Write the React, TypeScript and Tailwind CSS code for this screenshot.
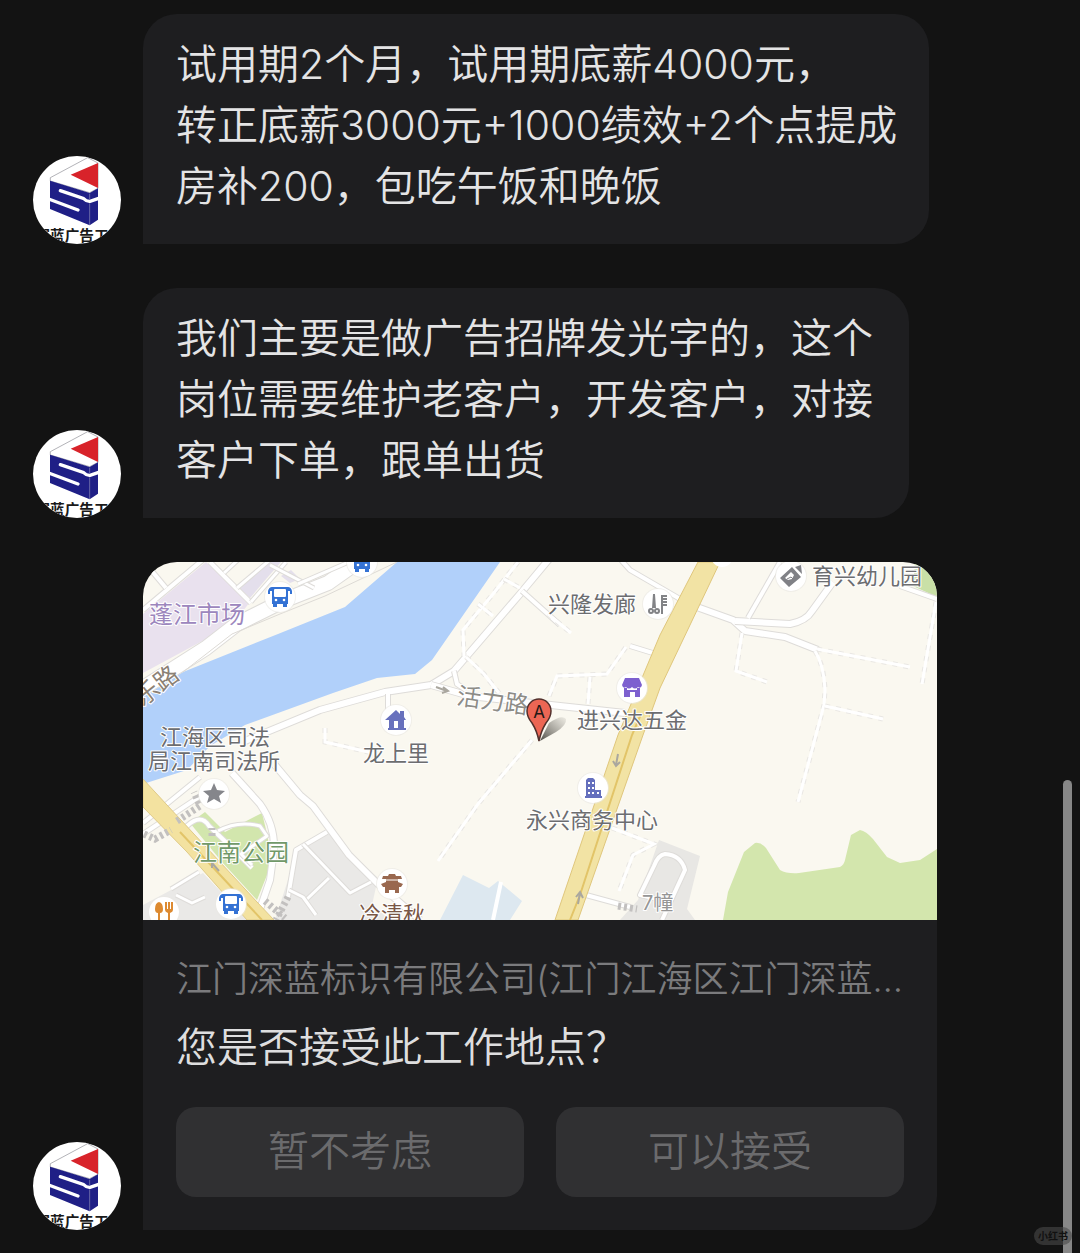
import { type ReactNode } from "react";

interface ChatMessage {
  id: string;
  lines: string[];
  width: string;
}

const messages: ChatMessage[] = [
  {
    id: "salary",
    lines: ["试用期2个月，试用期底薪4000元，", "转正底薪3000元+1000绩效+2个点提成", "房补200，包吃午饭和晚饭"],
    width: "w-[786px] pr-5",
  },
  {
    id: "duties",
    lines: ["我们主要是做广告招牌发光字的，这个岗位需要维护老客户，开发客户，对接客户下单，跟单出货"],
    width: "w-[766px] pr-8",
  },
];

function Avatar() {
  return (
    <svg viewBox="39 33 264 264" className="size-[88px] shrink-0 rounded-full bg-white">
      <path d="M91 108 V98 L203 38 L234 54 V130 L209 143 Z" fill="#fff" stroke="#8c8c94" strokeWidth="2" />
      <path d="M152 89 L234 54 V129 Z" fill="#d8232a" />
      <path d="M90 107 L209 144 L234 130 V224 L209 241 L90 192 Z" fill="#1f1f86" />
      <path d="M121 137 L190 160 Q200 170 210 169 L236 160" fill="none" stroke="#fff" strokeWidth="10" strokeLinecap="round" />
      <path d="M86 162 L174 195" stroke="#fff" strokeWidth="10" strokeLinecap="round" />
      <path d="M209 146 V163 M209 175 V240" stroke="#8d8db8" strokeWidth="2" />
      <text x="46" y="289" fontSize="44" fontWeight="700" fill="#1a1a1a">深蓝广告工</text>
    </svg>
  );
}

function Row({ children }: { children: ReactNode }) {
  return (
    <li className="flex items-end gap-[22px]">
      <Avatar />
      {children}
    </li>
  );
}

function Road({ d, w = 6 }: { d: string; w?: number }) {
  return (
    <g fill="none" strokeLinejoin="round">
      <path d={d} stroke="#dedcd9" strokeWidth={w + 2} />
      <path d={d} stroke="#fff" strokeWidth={w} />
    </g>
  );
}

function Lane({ d }: { d: string }) {
  return (
    <g fill="none">
      <path d={d} stroke="#e9e7e3" strokeWidth="5" strokeDasharray="5 6" />
      <path d={d} stroke="#fff" strokeWidth="3" />
    </g>
  );
}

function Poi({ x, y, children }: { x: number; y: number; children: ReactNode }) {
  return (
    <g transform={`translate(${x} ${y})`}>
      <circle r="16" fill="#e9e7e3" opacity=".6" />
      <circle r="15" fill="#fff" />
      {children}
    </g>
  );
}

function Bus() {
  return (
    <g fill="#3472d4">
      <path d="M-8 -10 H8 Q11 -10 12 -6 L12 -3 H10 V-6 H8 V7 H7 V10 H3 V7 H-3 V10 H-7 V7 H-8 V-6 H-10 V-3 H-12 V-6 Q-11 -10 -8 -10Z" />
      <rect x="-6" y="-8" width="12" height="8" rx="1" fill="#fff" />
      <circle cx="-4" cy="3" r="1.3" fill="#fff" />
      <circle cx="4" cy="3" r="1.3" fill="#fff" />
    </g>
  );
}

function Label({ x, y, size = 22, fill = "#6c6d70", rotate = 0, children }: {
  x: number;
  y: number;
  size?: number;
  fill?: string;
  rotate?: number;
  children: string;
}) {
  return (
    <text
      x={x}
      y={y}
      fontSize={size}
      fill={fill}
      stroke="#fff"
      strokeWidth="2"
      strokeLinejoin="round"
      paintOrder="stroke"
      transform={`rotate(${rotate} ${x} ${y})`}
    >
      {children}
    </text>
  );
}

function LocationMap() {
  return (
    <svg viewBox="143 562 794 358" className="block h-auto w-full bg-[#faf8f0] font-normal" role="img">
      {/* Market blocks */}
      <path d="M143 614 L206 562 L250 602 L232 625 L143 673Z" fill="#e9e1ee" />
      <path d="M238 587 L270 562 H281 L267 578 L250 598Z M281 576 L291 570 L300 579 L290 583Z" fill="#e4dfec" />

      {/* River */}
      <path d="M397 562 L345 607 L278 634 L183 672 L143 697 V784 L187 770 L210 746 L245 725 L333 693 L377 678 L415 674 L432 660 L500 562Z" fill="#b1d0fa" />

      {/* Parks and plots */}
      <path d="M190 823 L205 812 L225 832 L262 813 L268 838 L269 870 L257 900 L222 862Z" fill="#d2e6ad" />
      <path d="M723 920 L728 892 L736 872 L744 852 L755 843 Q761 842 766 848 L780 870 Q787 874 799 873 L840 867 Q844 865 845 860 L851 835 L860 830 Q866 831 873 839 L887 857 L900 863 L920 860 L937 849 V920Z" fill="#d3e6ad" />
      <path d="M915 562 H937 V597 L913 586Z" fill="#c9e0a7" />
      <path d="M297 852 L328 832 L378 878 L372 905 L390 920 H275Z M143 905 L203 873 L248 920 H143Z" fill="#eae9e7" />
      <path d="M659 840 L700 856 L687 909 L695 920 H620 L638 900Z" fill="#e8e7e4" />
      <path d="M463 875 L489 888 L498 881 L522 901 L510 920 H440Z" fill="#dde8f0" />
      <path d="M501 882 L493 920" stroke="#fff" strokeWidth="4" />

      {/* North-west streets */}
      <Road d="M143 688 L206 648 L237 624 L285 600 L328 583 L352 566 L358 558" w={14} />
      <path d="M183 672 L232 634 L280 614 L325 596 L397 562" fill="none" stroke="#dddad5" />
      <Road d="M143 610 L205 558" w={4} />
      <Road d="M151 570 L166 588" w={4} />
      <Road d="M210 562 L251 603" w={4} />
      <Road d="M224 573 L238 560" w={3} />
      <Road d="M237 588 L270 560" w={3} />
      <Road d="M251 602 L286 562" w={3} />
      <Road d="M270 565 L314 588" w={3} />
      <Road d="M298 584 L358 558" w={3} />

      {/* Central streets */}
      <Road d="M245 741 L320 710 L385 692 L431 685 L454 671 L520 594 L550 558" />
      <Road d="M431 685 L470 696 L560 706 L625 713" />
      <Road d="M454 671 L457 684 L466 690" w={4} />
      <Road d="M388 694 V715" w={4} />
      <Road d="M522 591 L560 625" w={4} />
      <Lane d="M548 614 L571 633" />
      <Lane d="M518 562 L493 594 L463 630 L464 656" />
      <Lane d="M478 604 L493 616" />
      <Lane d="M504 579 L520 588" />
      <Lane d="M466 657 L484 674 L499 693" />
      <Lane d="M549 696 L557 676 L607 674 L626 647" />
      <Lane d="M590 677 L588 704" />
      <Lane d="M532 740 L478 804 L438 861" />
      <Road d="M630 646 L656 654" w={4} />
      <Road d="M621 560 L630 570 L680 599" w={4} />
      <Road d="M694 606 L733 620 L745 631 L785 637 L818 650" />
      <Road d="M735 621 L790 624 Q806 621 812 611 L833 582" />
      <Road d="M748 618 L780 562" w={4} />
      <Road d="M900 586 L937 599" w={4} />
      <Lane d="M742 633 L736 671 L767 682" />
      <Lane d="M817 649 L910 667" />
      <Lane d="M936 602 L922 684" />
      <Lane d="M815 651 Q824 665 825 690 L824 705 L798 802" />
      <Lane d="M825 706 L883 719" />
      <Lane d="M325 728 V742 L377 754" />
      <Lane d="M612 828 L654 844 L633 855 L619 891" />

      {/* South-west streets */}
      <Road d="M232 773 L260 804 Q275 825 274 850 L270 880 L258 915" />
      <Road d="M275 765 L300 795 L313 806 L349 855 L377 883 L420 920" />
      <Road d="M327 832 L296 850 L288 897" w={4} />
      <Road d="M303 844 L350 893 L371 882" w={3} />
      <Road d="M329 878 L305 901" w={3} />
      <Road d="M289 890 L303 897 L316 915" w={3} />
      <Road d="M143 834 L205 793" w={4} />
      <Road d="M143 823 L157 812 L200 777" w={4} />
      <Road d="M187 826 Q201 813 209 826 L230 846 L252 868" w={4} />
      <Road d="M218 831 Q238 820 260 826 L267 836 L241 854 L252 865" w={3} />
      <Road d="M171 889 L199 872" w={3} />
      <Road d="M176 895 L192 903 L205 897" w={3} />
      <Road d="M662 920 L685 870 Q681 855 665 854 Q658 855 654 866 L640 895 L672 902" w={4} />
      <Road d="M586 895 L630 907" w={4} />

      {/* Trunk roads */}
      <path d="M698 562 H720 L660 688 L643 735 L578 920 H555 L618 735 L660 635Z" fill="#f2e3a4" stroke="#dfc67c" />
      <path d="M641 714 L632 735 L580 895 L570 920" fill="none" stroke="#e2c468" strokeWidth="2" />
      <path d="M143 779 L167 805 L220 862 L257 902 L274 920 H247 L187 852 L143 807Z" fill="#f3e2a0" stroke="#dfca88" />
      <path d="M180 832 L222 877 L262 920" fill="none" stroke="#e2c468" strokeWidth="2" />

      {/* Footbridges */}
      <g fill="none" stroke="#c2c0bf" strokeWidth="7" strokeDasharray="3 3">
        <path d="M177 821 L200 806 L194 792" />
        <path d="M144 834 L155 839 L171 830" />
        <path d="M212 836 V828" />
        <path d="M265 901 L285 918" />
        <path d="M288 897 L276 920" />
        <path d="M618 906 L637 909" />
      </g>

      {/* Direction arrows */}
      <g fill="none" stroke="#aaa79f" strokeWidth="2">
        <path d="M436 687 L447 691 M443 687 L448 691 L442 693" />
        <path d="M618 754 L616 765 M613 761 L616 766 L620 762" />
        <path d="M578 904 L580 893 M576 897 L580 892 L583 898" />
        <path d="M219 871 L212 863 M212 868 V862 H217" />
      </g>

      {/* Points of interest */}
      <Poi x={280} y={597}><Bus /></Poi>
      <Poi x={362} y={562}><Bus /></Poi>
      <Poi x={231} y={904}><Bus /></Poi>
      <Poi x={396} y={720}>
        <path d="M-11 0 L0 -10 L4 -6 V-9 H8 V-3 L10 0 H8 V8 H10 V10 H-8 V8 H-7 V0Z" fill="#6871bd" />
        <rect x="-2" y="1" width="4" height="7" fill="#fff" />
      </Poi>
      <Poi x={632} y={688}>
        <path d="M-7 -10 H7 L10 -3 Q9 1 6 -1 Q3 2 0 -1 Q-3 2 -6 -1 Q-9 1 -10 -3Z M-8 2 H8 V9 H-8Z M-8 0 H-5 V3 H-8Z M5 0 H8 V3 H5Z" fill="#7d60cf" />
        <path d="M-2 4 H3 V9 H-2Z" fill="#fff" />
      </Poi>
      <Poi x={593} y={788}>
        <path d="M-7 8 V-8 L-5 -10 H0 L2 -8 V2 H8 V8 H9 V10 H-8 V8Z" fill="#646fbd" />
        <path d="M-5 -6 h2 v2 h-2z M-1 -6 h2 v2 h-2z M-5 -1 h2 v2 h-2z M-1 -1 h2 v2 h-2z M-5 4 h2 v2 h-2z M-1 4 h2 v2 h-2z M4 4 h2 v2 h-2z" fill="#fff" />
      </Poi>
      <Poi x={214} y={794}>
        <path d="M0 -11 L3 -4 L11 -3 L5 2 L7 9 L0 5 L-7 9 L-5 2 L-11 -3 L-3 -4Z" fill="#85868b" />
      </Poi>
      <Poi x={392} y={884}>
        <path d="M-3 -10 H3 L4 -8 H9 L10 -5 H-10 L-9 -8 H-4Z M-6 -5 H6 V-2 L11 0 L9 3 H-9 L-11 0 L-6 -2Z M-7 3 H7 V9 H3 V6 H-3 V9 H-7Z" fill="#99684f" />
        <path d="M-9 -4 H9" stroke="#fff" />
      </Poi>
      <Poi x={164} y={912}>
        <path d="M-5 -10 Q-9 -9 -9 -3 Q-9 1 -6 1 V10 H-4 V1 Q-1 1 -1 -3 Q-1 -9 -5 -10Z M1 -10 H3 V-3 H4 V-10 H6 V-3 H7 V-10 H9 V-2 Q9 0 6 1 V10 H4 V1 Q1 0 1 -2Z" fill="#dd8a31" />
      </Poi>
      <Poi x={658} y={604}>
        <g fill="none" stroke="#828386" strokeWidth="2">
          <path d="M-4 -10 L-3 4 M-4 -10 L-5 4" />
          <circle cx="-7" cy="7" r="2" />
          <circle cx="-1" cy="7" r="2" />
          <path d="M4 10 V-9 M4 -8 H9 M4 -5 H9 M4 -2 H9 M4 1 H9" />
        </g>
      </Poi>
      <Poi x={791} y={576}>
        <path d="M-11 2 L1 -9 L10 1 L-2 11Z M4 -9 L10 -11 L11 -2Z" fill="#808186" />
        <path d="M-6 2 L0 -4 L3 -1 L1 3 L-3 4Z" fill="#fff" />
        <path d="M-4 3 L0 1 L2 3" fill="none" stroke="#808186" />
      </Poi>
      <circle cx="722" cy="556" r="11" fill="#fff" />

      {/* Place names */}
      <Label x={149} y={623} size={24} fill="#9c86bd">蓬江市场</Label>
      <Label x={143} y={707} size={24} fill="#8b8175" rotate={-38}>乐路</Label>
      <Label x={160} y={745}>江海区司法</Label>
      <Label x={148} y={769}>局江南司法所</Label>
      <Label x={193} y={861} size={24} fill="#719969">江南公园</Label>
      <Label x={363} y={761}>龙上里</Label>
      <Label x={359} y={922} fill="#795746">冷清秋</Label>
      <Label x={456} y={704} size={24} fill="#8d8c87" rotate={8}>活力路</Label>
      <Label x={548} y={612}>兴隆发廊</Label>
      <Label x={577} y={728}>进兴达五金</Label>
      <Label x={526} y={828}>永兴商务中心</Label>
      <Label x={812} y={584}>育兴幼儿园</Label>
      <Label x={642} y={910} size={20} fill="#969696">7幢</Label>

      {/* Marker */}
      <defs>
        <linearGradient id="pin-shadow" x1="0" y1="1" x2="1" y2="0">
          <stop offset="0" stopColor="#3a3833" stopOpacity=".9" />
          <stop offset="1" stopColor="#77746c" stopOpacity=".1" />
        </linearGradient>
      </defs>
      <path d="M540 741 L549 723 Q562 714 566 719 Q567 725 556 732Z" fill="url(#pin-shadow)" />
      <path d="M539 741 Q537 731 532 723 Q527 717 527 711 A12 12 0 0 1 551 711 Q551 717 546 723 Q541 731 539 741Z" fill="#ec6654" stroke="#52302c" strokeWidth="1.5" />
      <text x="539" y="718" fontSize="17" textAnchor="middle" fill="#231815">A</text>
    </svg>
  );
}

function LocationCard() {
  return (
    <section className="min-w-0 max-w-[794px] flex-1 overflow-hidden rounded-[34px] rounded-bl-none bg-[#1e1e20]">
      <LocationMap />
      <div className="p-[33px]">
        <p className="overflow-hidden whitespace-nowrap text-[36px] leading-[52px] text-[#7b7b7d]">
          江门深蓝标识有限公司(江门江海区江门深蓝…
        </p>
        <p className="mt-3 text-[41px] leading-[60px] text-[#dededf]">您是否接受此工作地点？</p>
        <div className="mt-[30px] grid grid-cols-2 gap-8">
          <button type="button" className="h-[90px] rounded-[20px] bg-[#303032] text-[41px] text-[#6b6b6d]">
            暂不考虑
          </button>
          <button type="button" className="h-[90px] rounded-[20px] bg-[#303032] text-[41px] text-[#6b6b6d]">
            可以接受
          </button>
        </div>
      </div>
    </section>
  );
}

export default function App() {
  return (
    <main className="relative min-h-screen overflow-hidden bg-[#131313] pb-[22px] pl-[33px] pr-8 pt-[14px] font-['Inter','Noto_Sans_CJK_SC',sans-serif] font-[350]">
      <ul className="flex flex-col gap-11">
        {messages.map((m) => (
          <Row key={m.id}>
            <div className={`rounded-[34px] rounded-bl-none bg-[#1e1e20] pb-[27px] pl-[33px] pt-5 text-[41px] leading-[61px] text-[#e4e4e5] ${m.width}`}>
              {m.lines.map((line) => (
                <p key={line}>{line}</p>
              ))}
            </div>
          </Row>
        ))}
        <Row>
          <LocationCard />
        </Row>
      </ul>

      {/* Scroll thumb and watermark */}
      <div className="absolute bottom-0 right-2 h-[473px] w-[9px] rounded-t-full bg-[#878787]" />
      <span className="absolute bottom-2 right-2 rounded-full bg-[#4a4a4a]/60 px-1 text-[10px] font-bold leading-[18px] text-[#111]">
        小红书
      </span>
    </main>
  );
}
